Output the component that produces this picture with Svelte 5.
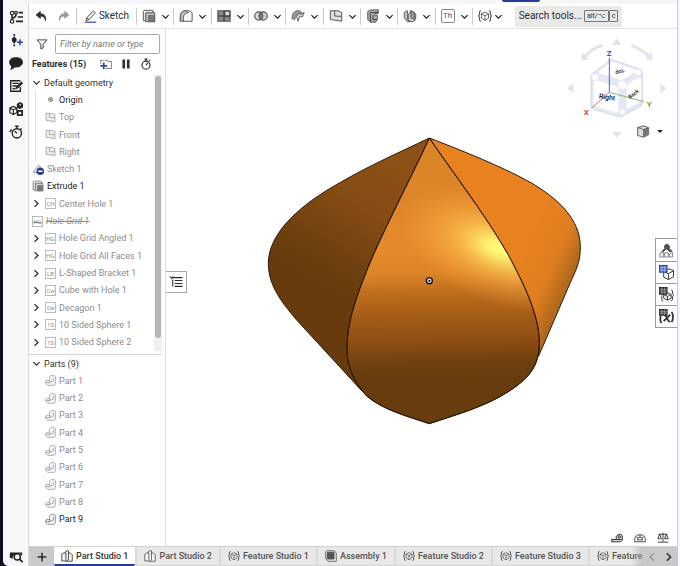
<script>
  const tools = ['extrude', 'fillet', 'pattern', 'boolean', 'sheet', 'plane', 'frame', 'mirror', 'thicken'];
  const features = [
    { label: 'Origin', icon: 'origin', kind: 'child dark' },
    { label: 'Top', icon: 'face', kind: 'child' },
    { label: 'Front', icon: 'face', kind: 'child' },
    { label: 'Right', icon: 'face', kind: 'child' },
    { label: 'Sketch 1', icon: 'sketchOff', kind: 'flat' },
    { label: 'Extrude 1', icon: 'extrude', kind: 'flat dark' },
    { label: 'Center Hole 1', code: 'CH', kind: 'nested' },
    { label: 'Hole Grid 1', code: 'HG', kind: 'flat struck' },
    { label: 'Hole Grid Angled 1', code: 'HG', kind: 'nested' },
    { label: 'Hole Grid All Faces 1', code: 'HG', kind: 'nested' },
    { label: 'L-Shaped Bracket 1', code: 'LB', kind: 'nested' },
    { label: 'Cube with Hole 1', code: 'Cw', kind: 'nested' },
    { label: 'Decagon 1', code: 'De', kind: 'nested' },
    { label: '10 Sided Sphere 1', code: '1S', kind: 'nested' },
    { label: '10 Sided Sphere 2', code: '1S', kind: 'nested' }
  ];
  const parts = [1, 2, 3, 4, 5, 6, 7, 8, 9];
  const tabs = [
    ['Part Studio 1', 'studio'],
    ['Part Studio 2', 'studio'],
    ['Feature Studio 1', 'braces'],
    ['Assembly 1', 'assembly'],
    ['Feature Studio 2', 'braces'],
    ['Feature Studio 3', 'braces'],
    ['Feature', 'braces']
  ];
  let active = $state(0);
</script>

{#snippet icon(name)}
  <svg class="icon" viewBox="0 0 16 16" aria-hidden="true" fill="none" stroke="currentColor" stroke-width="1.3">
    {#if name === 'tree'}
      <circle cx="3.5" cy="3.5" r="2" /><circle cx="8" cy="3" r="1.5" /><circle cx="3.5" cy="13" r="2" />
      <path d="M3.5 5.5v5.500M8 4.500Q8 9 3.500 9M11 3h5M10 8h6M8 13h8" stroke-width="1.8" />
    {:else if name === 'insert'}
      <path d="M6 1v5M6 10v6" stroke-dasharray="2 1" stroke-width="2" /><circle cx="6" cy="8" r="2.2" fill="currentColor" />
      <path d="M12.500 7v7M9 10.500h7" stroke="#2d46a8" stroke-width="1.8" />
    {:else if name === 'comment'}
      <path d="M8 2C3.500 2 .8 4.300 .8 7.200c0 1.800 1 3.300 2.700 4.200L2.500 15l4.300-2.600c5 .5 8.500-2 8.500-5.200C15.300 4.300 12.500 2 8 2z" fill="currentColor" />
    {:else if name === 'notes'}
      <path d="M13 9v5H2V2h11M4 5h7M4 8h5M4 11h3" stroke-width="1.5" /><path d="M7.500 11.500l1-3L14 3l1.800 1.800-5.500 5.500z" fill="currentColor" stroke-width=".7" />
    {:else if name === 'helpcube'}
      <path d="M1 7l4-2 4 2v5l-4 2.500L1 12zM1 7l4 2.200L9 7M5 9.200v5" /><circle cx="12.5" cy="4" r="3" fill="currentColor" />
      <path d="M11.500 3.200q1-1.500 2 0l-1 1.500" stroke="#fff" stroke-width=".8" /><path d="M10 10h5v5h-5z" stroke-width="2" />
    {:else if name === 'stopwatch'}
      <circle cx="8" cy="9.5" r="5.3" stroke-width="1.6" /><path d="M6 1.500h4M8 1.500V4M12 4.500l1.500-1.500M8 9.500l2.500-3" stroke-width="1.6" />
    {:else if name === 'history'}
      <circle cx="9" cy="9.5" r="5.3" stroke-width="1.6" /><path d="M7 1.500h4M9 2v2M3 5L1 8M9 9.500L6.500 7M13 4l1.500 1" stroke-width="1.6" />
    {:else if name === 'lens'}
      <path d="M1 4h14v4l-3-3-6 1-2 4H1z" fill="currentColor" stroke="none" /><circle cx="9.5" cy="9" r="3.5" fill="#f6f7f8" stroke-width="1.6" /><path d="M12 11.500l3.500 3.500" stroke-width="2" /><path d="M1 8l3 3" />
    {:else if name === 'undo'}
      <path d="M7 2L1.500 6.500 7 11V8q6-.5 7 6 1-9-7-9z" fill="currentColor" stroke-linejoin="round" />
    {:else if name === 'redo'}
      <path d="M9 2l5.500 4.500L9 11V8q-6-.5-7 6-1-9 7-9z" fill="currentColor" stroke-linejoin="round" />
    {:else if name === 'pencil'}
      <path d="M2.500 13l1-3.500L11.500 1l2.500 2.500L6 12zM3.500 9.500L6 12" fill="#eee" stroke-width="1" /><path d="M1 15h14" stroke="#3048b8" stroke-width="1.5" />
    {:else if name === 'extrude'}
      <path d="M1.500 13.500v-11l1-1h9l2 2" fill="#eee" stroke-width="1.1" /><path d="M1.500 13.500h3v-9h9l-2-3" fill="#eee" stroke-width="1.1" /><path d="M4.500 4.500h10v10h-10z" fill="#ddd" stroke-width="1.1" /><path d="M7 7h7.500v7.500H7z" fill="#777" stroke-width=".6" />
    {:else if name === 'fillet'}
      <path d="M1.500 14V8Q2 2 8 2h4q3 1 3 3v9H4" fill="#f6f6f6" stroke-width="1.1" /><path d="M1.500 14V8Q2 2 8 2l3 2Q5 5 5 10v4z" fill="#bbb" stroke-width="1" />
    {:else if name === 'pattern'}
      <path d="M1 2h14v12H1z" fill="#888" /><path d="M9 2.500h5.500V8H9z" fill="#ddd" /><path d="M8 2v12M1 8h14" stroke="#333" stroke-width="1.3" />
    {:else if name === 'boolean'}
      <circle cx="5.5" cy="8" r="4.7" fill="#ddd" /><circle cx="10.5" cy="8" r="4.7" fill="#ccc" /><path d="M8 4q-4 4 0 8 4-4 0-8" fill="#888" />
    {:else if name === 'sheet'}
      <path d="M1 11Q1 2 9 1.500l4 3-3 1Q5 6 4.500 12z" fill="#999" stroke-width=".8" /><path d="M6 9l3-4 3 1 3-2-2 5-3-1-2 6-1-4z" fill="#ddd" stroke-width="1" />
    {:else if name === 'plane' || name === 'face'}
      <path d="M1.500 2h9l4 2v10l-13-2z" fill={name === 'plane' ? '#ddd' : '#eee'} stroke-width="1.1" /><path d="M6.500 2v6l8 .5" stroke-width="1.1" />
    {:else if name === 'frame'}
      <path d="M2 3l3-2h9v4h-4v2h3v4l-2 4H5l-3-3z" fill="#aaa" stroke-width="1.1" /><path d="M5 15V4h9M8 7v5h5" stroke="#444" stroke-width="1.1" />
    {:else if name === 'mirror'}
      <path d="M1.500 4L5 2v10l3 2.500H5l-3.500-4.500zM6 12V7l3-5 4 2 1.500 2v6l-3 2.500H8z" fill="#ccc" stroke-width="1.1" /><path d="M9 2v8l4 2V4z" fill="#999" stroke-width="1" />
    {:else if name === 'braces'}
      <path d="M3.500 2Q1.800 2 1.800 4v2.500L.7 8l1.100 1.500V12q0 2 1.700 2M12.500 2q1.700 0 1.700 2v2.500L15.300 8l-1.100 1.500V12q0 2-1.700 2" /><path d="M8 3.500l4 2v5L8 13l-4-2.500v-5zM4 5.500l4 2.200 4-2.200M8 7.700V13" stroke-width="1" />
    {:else if name === 'studio'}
      <path d="M5.500 4V2.500L8 1h2v12l-3 2H5.500M9.500 4h3l2.500 2v9H7M1 5.500L3.500 4h3v9L5 14.500H1z" fill="#f3f3f3" stroke-width="1.1" />
    {:else if name === 'assembly'}
      <path d="M1 2.500L2.500 1h10l2.500 3v11H4l-3-3z" fill="#eee" stroke-width="1.1" /><path d="M3 3h9v9H3z" fill="#555" />
    {:else if name === 'part'}
      <path d="M6.500 6V3l2-2H14l1 1v11l-1.500 2H4L1 12.500V9l2-1h4zM7 8v3l-2 1M12 4v5l-2 1H7M1 11h6" stroke-width="1.1" fill="#f7f7f7" />
    {:else if name === 'folder'}
      <path d="M6 3h3l1 1.500h5.500V14H7M1 8V3h4" stroke="#666" stroke-width="1.1" /><path d="M5 6v9M.5 10.500h9" stroke="#2d46a8" stroke-width="2.2" />
    {:else if name === 'pause'}
      <path d="M5 2v12M11 2v12" stroke-width="3.5" />
    {:else if name === 'origin'}
      <circle cx="8" cy="8" r="3" fill="#ddd" stroke="#777" /><circle cx="8" cy="8" r="1" />
    {:else if name === 'sketchOff'}
      <path d="M1.500 12L9 3l2 2-5 8z" /><circle cx="11" cy="11" r="5" fill="#273c99" stroke="none" /><path d="M8 11h6" stroke="#fff" stroke-width="2" />
    {:else if name === 'funnel'}
      <path d="M1.500 2.500h13L9.500 8.500V13l-3 1.500v-6z" stroke-width="1.2" />
    {:else if name === 'outline'}
      <path d="M4.500 3h11M6.500 6.300h9M6.500 9.700h9M6.500 13h9M1 1.500l2 2.500 2-2.500M4.300 5v8" stroke-width="1.2" />
    {:else if name === 'parttable'}
      <path d="M3 9l3-3V3l2-2 3 2v3l3 3h-3L8 6 5 9z" fill="#555" stroke-width=".8" /><path d="M1 10.500h4v4.500H1zM6 10.500h4v4.500H6zM14.500 10v5H11v-3z" fill="#f4f4f4" stroke="#777" stroke-width=".9" />
    {:else if name === 'cubetable'}
      <path d="M10.500 4l5 2v6.500L10 15.500 5 13V7zM5 7l5 2.300L15.500 6M10 9.300v6" stroke-width="1" /><path d="M.5.5h8v7h-8z" fill="#4c68c8" stroke="#2d46a8" /><path d="M.5 3h8M.5 5.500h8M3 .5v7M6 .5v7" stroke="#dfe5ff" stroke-width=".5" />
    {:else if name === 'bracetable'}
      <path d="M3 9v4q0 2 1.500 2M13 3q2 0 1.500 4l1 2-1 1.500q.5 4-1.500 4.500M9 6l4 2v4l-4 2-4-2V8zM5 8l4 2 4-2M9 10v4" stroke-width="1" /><path d="M.5.5h8v7h-8z" fill="#444" /><path d="M.5 3h8M.5 5.500h8M3 .5v7M6 .5v7" stroke="#ccc" stroke-width=".5" />
    {:else if name === 'vartable'}
      <path d="M2 7q-1.500 4 .5 8M13.500 3q3 5 0 11M5 13l7-7M6 7q2 0 3 3.500t3 2.500" stroke-width="1.8" /><path d="M.5.5h8v6h-8z" fill="#444" /><path d="M.5 2.500h8M.5 4.500h8M3 .5v6M6 .5v6" stroke="#ccc" stroke-width=".5" />
    {:else if name === 'tape'}
      <path d="M1 10h6V6q2-4 6-3 3 1 2 5v3l-2 2H1zM1 10l1-1M7 10h7" fill="#ddd" /><circle cx="11" cy="6.5" r="1.6" />
    {:else if name === 'protractor'}
      <path d="M.8 13V11Q1 3.500 8 3.500T15.200 11v2zM4.500 10.500q0-3.500 3.500-3.500t3.500 3.500zM3 6l2 2M13 6l-2 2M8 4v3" stroke-width="1.1" />
    {:else if name === 'scale'}
      <path d="M8 1v12M2 3h12M3.500 3L1 9h5zM12.500 3L10 9h5zM1 13.500h14" stroke-width="1.2" />
    {:else if name === 'down'}
      <path d="M2.500 5.500L8 11l5.500-5.500" stroke-width="2.2" />
    {:else if name === 'right'}
      <path d="M4.500 2l6 6-6 6" stroke-width="2.5" />
    {:else if name === 'left'}
      <path d="M11 2L5 8l6 6" stroke-width="2.2" />
    {:else if name === 'plus'}
      <path d="M8 1v14M1 8h14" stroke-width="2.5" />
    {/if}
  </svg>
{/snippet}

<div class="desktop">
  <div class="app">
    <header class="topline"><span></span></header>
    <div class="body">
      <nav class="rail" aria-label="Panels">
        {#each ['tree', 'insert', 'comment', 'notes', 'helpcube', 'history'] as name}
          <button aria-label={name}>{@render icon(name)}</button>
        {/each}
        <button class="last" aria-label="Search in document">{@render icon('lens')}</button>
      </nav>

      <div class="work">
        <div class="toolbar">
          <div class="edit">
            <button aria-label="Undo">{@render icon('undo')}</button>
            <button class="off" aria-label="Redo">{@render icon('redo')}</button>
          </div>
          <button class="sketch">{@render icon('pencil')}Sketch</button>
          <div class="groups">
            {#each tools as t}
              <div class="group">
                <button aria-label={t}>{#if t === 'thicken'}<span class="th">Th</span>{:else}{@render icon(t)}{/if}</button>
                <button class="more" aria-label="More {t} tools">{@render icon('down')}</button>
              </div>
            {/each}
          </div>
          <div class="group custom">
            <button aria-label="Custom features">{@render icon('braces')}</button>
            <button class="more" aria-label="More custom features">{@render icon('down')}</button>
          </div>
          <button class="search">Search tools... <span><kbd>alt/⌥</kbd><kbd>c</kbd></span></button>
        </div>

        <main>
          <aside>
            <div class="filter">
              {@render icon('funnel')}
              <input type="text" aria-label="Filter features" placeholder="Filter by name or type" />
            </div>
            <div class="title">
              <h2>Features (15)</h2>
              <button aria-label="Add folder">{@render icon('folder')}</button>
              <button aria-label="Pause">{@render icon('pause')}</button>
              <button aria-label="Regeneration times">{@render icon('stopwatch')}</button>
            </div>
            <section class="features">
              <ul>
                <li class="head"><button class="tw" aria-label="Collapse">{@render icon('down')}</button>Default geometry</li>
                {#each features as f}
                  <li class={f.kind}>
                    {#if f.kind === 'nested'}<button class="tw" aria-label="Expand {f.label}">{@render icon('right')}</button>{/if}
                    {#if f.code}<span class="code">{f.code}</span>{:else}{@render icon(f.icon)}{/if}
                    <span>{f.label}</span>
                  </li>
                {/each}
              </ul>
              <div class="track"><div></div></div>
            </section>
            <section class="parts">
              <ul>
                <li class="head"><button class="tw" aria-label="Collapse">{@render icon('down')}</button>Parts (9)</li>
                {#each parts as n}
                  <li class="child" class:dark={n === 9}>{@render icon('part')}<span>Part {n}</span></li>
                {/each}
              </ul>
            </section>
          </aside>

          <div class="canvas">
            <svg class="model" viewBox="0 0 1050 960" role="img" aria-label="Part 9">
              <defs>
                <linearGradient id="left" x1="430" y1="130" x2="215" y2="500" gradientUnits="userSpaceOnUse">
                  <stop offset="0" stop-color="#8d5015" /><stop offset=".35" stop-color="#864c14" /><stop offset=".75" stop-color="#6f410f" /><stop offset="1" stop-color="#673b0e" />
                </linearGradient>
                <linearGradient id="front" x1="500" y1="54" x2="515" y2="911" gradientUnits="userSpaceOnUse">
                  <stop offset="0" stop-color="#d98527" /><stop offset=".2" stop-color="#dd8529" /><stop offset=".4" stop-color="#e68b2c" /><stop offset=".47" stop-color="#dd8428" /><stop offset=".54" stop-color="#c06f1e" /><stop offset=".62" stop-color="#a65d17" /><stop offset=".71" stop-color="#8f4e13" /><stop offset=".79" stop-color="#6e400f" /><stop offset=".84" stop-color="#683c0e" /><stop offset="1" stop-color="#683c0e" />
                </linearGradient>
                <radialGradient id="shine" cx="0" cy="0" r="1" gradientUnits="userSpaceOnUse" gradientTransform="translate(748 385) rotate(22) scale(320 165)">
                  <stop offset="0" stop-color="#ffff7c" /><stop offset=".12" stop-color="#fff876" stop-opacity=".95" /><stop offset=".35" stop-color="#ffd75f" stop-opacity=".65" /><stop offset=".6" stop-color="#ffb84c" stop-opacity=".4" /><stop offset="1" stop-color="#f5a03a" stop-opacity="0" />
                </radialGradient>
                <linearGradient id="rightside" x1="830" y1="375" x2="975" y2="440" gradientUnits="userSpaceOnUse">
                  <stop offset="0" stop-color="#e8811f" /><stop offset=".6" stop-color="#df7d20" /><stop offset="1" stop-color="#b0691d" />
                </linearGradient>
              </defs>
              <g stroke="#2a1a08" stroke-width="3" stroke-linejoin="round">
                <path fill="url(#left)" d="M538 54C455 94 355 138 270 188 160 248 55 335 55 430 55 500 100 552 140 600L335 812 600 500z" />
                <path fill="url(#rightside)" d="M538 54C650 97 800 158 870 205 950 258 991 315 991 382 991 430 975 455 960 490L866 708 600 500z" />
                <path fill="url(#front)" d="M538 54C480 180 400 330 355 440 315 540 290 610 291 690 292 745 315 790 350 828 400 870 470 888 538 911 605 888 705 861 775 815 835 776 869 740 868 665 866 580 820 490 775 405 700 275 610 160 538 54z" />
                <path fill="url(#shine)" d="M538 54C480 180 400 330 355 440 315 540 290 610 291 690 292 745 315 790 350 828 400 870 470 888 538 911 605 888 705 861 775 815 835 776 869 740 868 665 866 580 820 490 775 405 700 275 610 160 538 54z" />
              </g>
              <circle cx="538" cy="482" r="9" fill="#ddd" stroke="#111" stroke-width="4" /><circle cx="538" cy="482" r="3" />
            </svg>

            <button class="outline" aria-label="Feature list">{@render icon('outline')}</button>

            <svg class="cube" viewBox="195 108 315 312" role="img" aria-label="View cube: Right">
              <g fill="#dfe3ee">
                <path d="M350 116l14 18h-28zM350 413l14-17h-28zM202 265l18-15v30zM499 265l-18-15v30zM244 181l3-25 19 23zM458 180l-2-25-20 23z" />
              </g>
              <path d="M256 168q22-24 51-32M394 136q32 12 52 33" fill="none" stroke="#dfe3ee" stroke-width="9" />
              <path d="M328 183q8-4 16-1l70 24q13 5 13 18v82q0 10-9 14l-50 28q-8 4-17 1l-64-20q-14-5-14-17v-78q0-10 8-15z" fill="#e4e8f2" stroke="#d8deed" stroke-width="4" />
              <g fill="#fff" stroke="#dde2ee" stroke-width="1">
                <path d="M330 187q7-4 15-1l59 22q9 4 1 9l-33 21q-7 4-15 1l-58-18q-9-4-1-9z" />
                <path d="M280 247q0-10 12-6l53 16q11 4 11 14v60q0 10-12 7l-53-17q-11-4-11-14v-50z" />
                <path d="M379 261q0-9 8-13l25-13q12-6 12 5v56q0 8-7 12l-26 15q-12 6-12-4z" />
                <circle cx="285" cy="231" r="10" /><circle cx="367" cy="255" r="13" /><circle cx="414" cy="217" r="9" /><circle cx="368" cy="335" r="8" />
              </g>
              <path d="M328 173v103" stroke="#6655dc" stroke-width="3" /><path d="M328 277l-54 48" stroke="#df6860" stroke-width="3" /><path d="M328 277l103 28" stroke="#7cba72" stroke-width="3" />
              <g font-size="24" font-weight="500"><text x="320" y="167" fill="#3b2fd0">Z</text><text x="251" y="346" fill="#d32f2f">X</text><text x="440" y="321" fill="#3c9b3c">Y</text></g>
              <g fill="#111" font-weight="500"><text x="296" y="295" font-size="21" transform="rotate(8 296 295)">Right</text><text x="390" y="297" font-size="16" transform="rotate(-38 390 297)">Back</text><text x="370" y="205" font-size="16" transform="rotate(158 370 205)">Top</text></g>
            </svg>

            <button class="shade" aria-label="View options">
              <svg viewBox="0 0 42 36" aria-hidden="true"><path d="M2 6l18-5 15 6v20L20 35 2 30z" fill="#ddd" stroke="#444" stroke-width="2.5" /><path d="M20 12l15-5v20L20 35z" fill="#777" /><path d="M2 6l18 6v23M20 12l15-5" stroke="#444" stroke-width="2" fill="none" /></svg>
              <i></i>
            </button>

            <div class="tables">
              {#each ['parttable', 'cubetable', 'bracetable', 'vartable'] as name}
                <button aria-label={name}>{@render icon(name)}</button>
              {/each}
            </div>
            <div class="measure">
              {#each ['tape', 'protractor', 'scale'] as name}
                <button aria-label={name}>{@render icon(name)}</button>
              {/each}
            </div>
          </div>
        </main>

        <footer>
          <button class="add" aria-label="Add tab">{@render icon('plus')}</button>
          <div class="tabs">
            {#each tabs as [label, name], i}
              <button class="tab" class:active={i === active} onclick={() => (active = i)}>{@render icon(name)}{label}</button>
            {/each}
          </div>
          <div class="arrows">
            <button class="off" aria-label="Previous tabs">{@render icon('left')}</button>
            <button aria-label="Next tabs">{@render icon('right')}</button>
          </div>
        </footer>
      </div>
    </div>
  </div>
</div>

<style>
  :global(body) { margin: 0; }
  * { box-sizing: border-box; }
  button { border: 0; padding: 0; margin: 0; background: none; color: inherit; font: inherit; display: flex; align-items: center; justify-content: center; }
  ul, h2 { margin: 0; padding: 0; list-style: none; }
  .icon { width: 12px; height: 12px; flex: none; display: block; }
  .desktop {
    height: 100vh; min-height: 480px; padding: 0 3px; overflow: hidden;
    font: 9px/12px Roboto, 'Open Sans', sans-serif; color: #2b2d31;
    background: linear-gradient(90deg, #0c0d24 50%, #f5f6fc 50%);
  }
  .app { height: 100%; display: flex; flex-direction: column; background: #fff; border-radius: 0 0 0 6px; overflow: hidden; border-right: 1px solid #c3cdea; margin-right: -1px; }
  .topline { height: 4px; flex: none; background: #f7f7f9; display: flex; justify-content: flex-end; }
  .topline span { width: 38px; height: 2px; margin-right: 137px; background: #273c99; border-radius: 0 0 2px 2px; }
  .body { flex: 1; min-height: 0; display: flex; }
  .rail { width: 26px; flex: none; background: #f6f7f8; border-right: 1px solid #dcdcdc; display: flex; flex-direction: column; align-items: center; padding: 1px 0 3px; color: #222; }
  .rail button { width: 24px; height: 23px; }
  .rail .icon { width: 14px; height: 14px; }
  .rail .last { margin-top: auto; height: 14px; }
  .work { flex: 1; min-width: 0; display: flex; flex-direction: column; }

  .toolbar { height: 25px; flex: none; display: flex; align-items: center; border-bottom: 1px solid #e4e4e4; }
  .edit { display: flex; gap: 11px; padding: 0 6px; border-right: 1px solid #ccc; height: 17px; align-items: center; }
  .off { color: #999; }
  .sketch { height: 17px; width: 59px; gap: 2px; font-size: 10px; flex: none; }
  .sketch .icon { width: 13px; height: 13px; }
  .groups { display: flex; flex: 0 1 336px; }
  .group { flex: 1; height: 17px; border-left: 1px solid #ccc; display: flex; align-items: center; padding-left: 5px; gap: 5px; color: #555; }
  .group .icon { width: 14px; height: 14px; }
  .group .more .icon { width: 9px; height: 9px; color: #222; }
  .group.custom { flex: none; width: 43px; gap: 2px; }
  .th { border: 1px solid #888; border-radius: 2px; width: 14px; height: 14px; font-size: 8px; line-height: 12px; }
  .search { height: 21px; background: #e9e9e9; border-radius: 2px; padding: 0 6px; gap: 2px; font-size: 10px; width: 107px; flex: none; white-space: nowrap; }
  .search span { display: flex; }
  kbd { font: 7px/10px Roboto, 'DejaVu Sans', sans-serif; border: 1px solid #777; border-radius: 1px; padding: 0 2px; }

  main { flex: 1; min-height: 0; display: flex; }
  aside { width: 137px; flex: none; border-right: 1px solid #dedede; display: flex; flex-direction: column; }
  .filter { display: flex; align-items: center; gap: 7px; padding: 5px 5px 0 7px; }
  input { flex: 1; min-width: 0; height: 20px; border: 1px solid #aaa; border-radius: 2px; padding: 0 4px; font: italic 9px/12px Roboto, sans-serif; background: #fff; outline: 0; }
  input::placeholder { color: #777; opacity: 1; font-style: italic; }
  .title { display: flex; align-items: center; height: 20px; padding: 0 13px 0 3px; gap: 8px; }
  .title h2 { font-size: 9px; line-height: 12px; font-weight: 700; margin-right: auto; }
  .features { flex: 8 1 0; min-height: 0; display: flex; border-bottom: 1px solid #d5d5d5; padding-bottom: 3px; margin-right: 3px; }
  .parts { flex: 5 1 0; min-height: 0; display: flex; padding-bottom: 18px; }
  ul { flex: 1; display: grid; grid-auto-rows: 1fr; color: #8c8c8c; min-width: 0; }
  li { display: flex; align-items: center; gap: 3px; padding-left: 3px; min-height: 0; white-space: nowrap; }
  .head { color: #333; }
  .dark { color: #222; }
  .tw { width: 9px; color: #333; }
  .tw .icon { width: 9px; height: 9px; }
  .nested .tw { margin-right: 1px; }
  .child { padding-left: 16px; }
  .features .child { margin-left: 6px; border-left: 1px solid #ddd; padding-left: 9px; }
  .child .icon { width: 11px; height: 11px; color: #999; }
  .dark .icon { color: #777; }
  .code { width: 11px; height: 11px; flex: none; border: 1px solid #bbb; font-size: 6px; line-height: 9px; display: flex; justify-content: center; }
  .struck { font-style: italic; text-decoration: line-through; }
  .struck .code { font-style: normal; }
  .track { width: 8px; background: #f1f1f1; padding: 2px 1px; flex: none; }
  .track div { height: 96%; background: #b6b6b6; border-radius: 3px; }

  .canvas { flex: 1; min-width: 0; position: relative; overflow: hidden; }
  .model { position: absolute; width: 350px; height: 320px; left: 84px; top: 91px; }
  .outline { position: absolute; left: 0; top: 242px; width: 21px; height: 22px; border: 1px solid #aaa; border-left: 0; }
  .outline .icon { width: 14px; height: 14px; }
  .cube { position: absolute; right: 7px; top: 7px; width: 105px; height: 104px; }
  .shade { position: absolute; right: 14px; top: 96px; gap: 6px; }
  .shade svg { width: 14px; height: 13px; }
  .shade i { border: 3px solid transparent; border-top-color: #222; border-bottom: 0; }
  .tables { position: absolute; right: 0; top: 209px; border: 1px solid #999; border-right: 0; }
  .tables button { width: 21px; height: 22px; }
  .tables button + button { border-top: 1px solid #999; }
  .tables .icon { width: 15px; height: 15px; }
  .measure { position: absolute; right: 8px; bottom: 2px; display: flex; gap: 11px; }

  footer { height: 20px; flex: none; display: flex; background: #d9d9d9; border-top: 1px solid #d0d0d0; }
  .add { width: 25px; flex: none; background: #c9c9c9; }
  .add .icon { width: 10px; height: 10px; }
  .tabs { flex: 1; min-width: 0; overflow: hidden; display: flex; gap: 2px; position: relative; }
  .tabs::after { content: ''; position: absolute; right: 0; top: 0; bottom: 0; width: 12px; background: linear-gradient(90deg, transparent, #aaaaaa99); }
  .tab { flex: none; padding: 0 7px 1px; gap: 3px; background: #e8e8e8; color: #555; font-size: 9px; font-weight: 500; border-radius: 0 0 2px 2px; border-bottom: 1px solid #d5d5d5; white-space: nowrap; }
  .tab.active { background: #fff; color: #333; border-bottom: 2px solid #273c99; padding-bottom: 0; }
  .arrows { display: flex; width: 34px; flex: none; background: #c9c9c9; }
  .arrows button { flex: 1; }
  .arrows .icon { width: 10px; height: 10px; }
</style>
